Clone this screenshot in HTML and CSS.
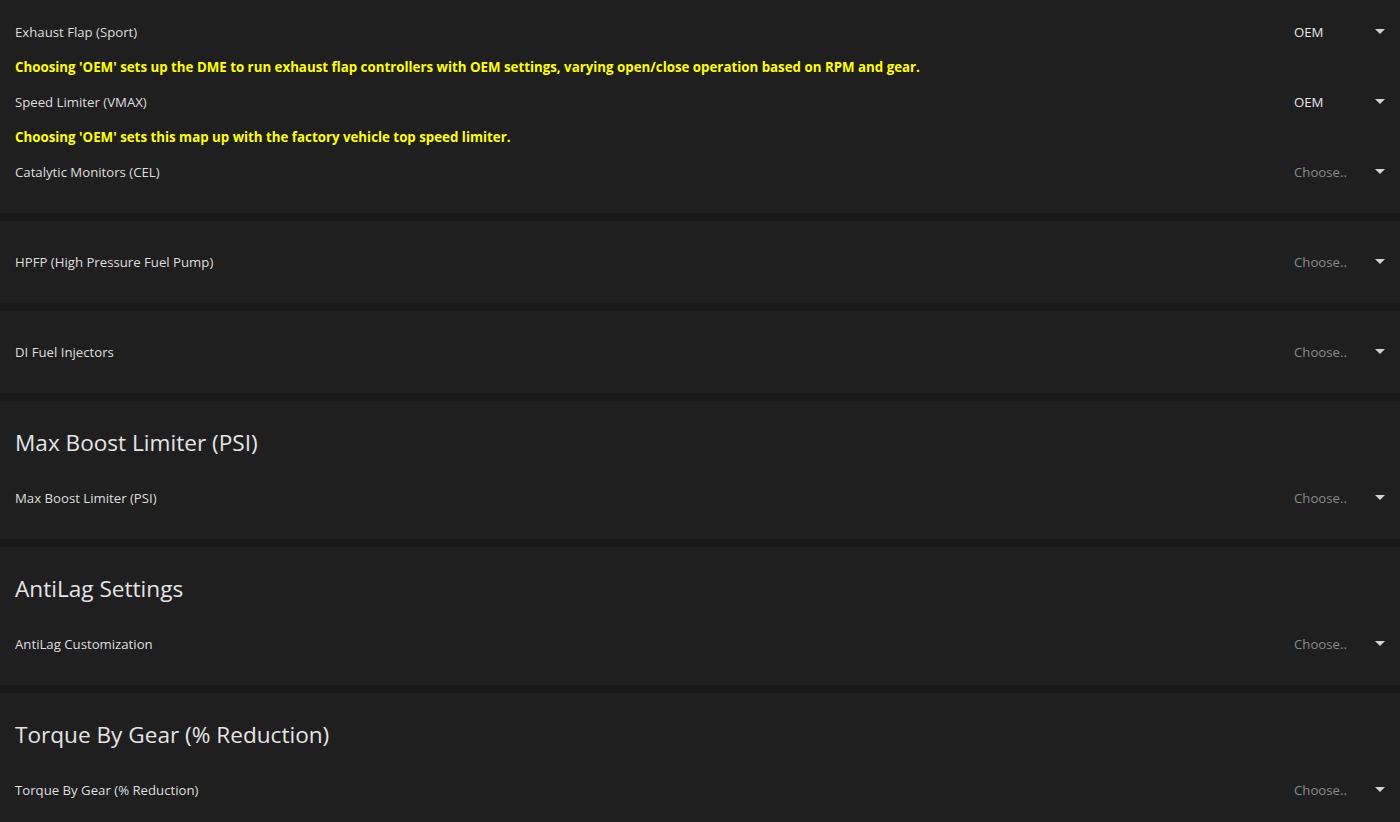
FILE: index.html
```html
<!DOCTYPE html>
<html lang="en">
<head>
    <meta charset="UTF-8">
    <title>Map Options</title>
    <link rel="stylesheet" href="styles.css">
</head>
<body>
    <div class="panel panel-first">
        <div class="option-row">
            <span class="option-label">Exhaust Flap (Sport)</span>
            <div class="picker"><span class="picker-value">OEM</span><span class="caret"></span></div>
        </div>
        <p class="option-note">Choosing 'OEM' sets up the DME to run exhaust flap controllers with OEM settings, varying open/close operation based on RPM and gear.</p>
        <div class="option-row">
            <span class="option-label">Speed Limiter (VMAX)</span>
            <div class="picker"><span class="picker-value">OEM</span><span class="caret"></span></div>
        </div>
        <p class="option-note">Choosing 'OEM' sets this map up with the factory vehicle top speed limiter.</p>
        <div class="option-row">
            <span class="option-label">Catalytic Monitors (CEL)</span>
            <div class="picker"><span class="picker-value empty">Choose..</span><span class="caret"></span></div>
        </div>
    </div>

    <div class="panel">
        <div class="option-row">
            <span class="option-label">HPFP (High Pressure Fuel Pump)</span>
            <div class="picker"><span class="picker-value empty">Choose..</span><span class="caret"></span></div>
        </div>
    </div>

    <div class="panel">
        <div class="option-row">
            <span class="option-label">DI Fuel Injectors</span>
            <div class="picker"><span class="picker-value empty">Choose..</span><span class="caret"></span></div>
        </div>
    </div>

    <div class="panel">
        <h2 class="panel-title">Max Boost Limiter (PSI)</h2>
        <div class="option-row">
            <span class="option-label">Max Boost Limiter (PSI)</span>
            <div class="picker"><span class="picker-value empty">Choose..</span><span class="caret"></span></div>
        </div>
    </div>

    <div class="panel">
        <h2 class="panel-title">AntiLag Settings</h2>
        <div class="option-row">
            <span class="option-label">AntiLag Customization</span>
            <div class="picker"><span class="picker-value empty">Choose..</span><span class="caret"></span></div>
        </div>
    </div>

    <div class="panel">
        <h2 class="panel-title">Torque By Gear (% Reduction)</h2>
        <div class="option-row">
            <span class="option-label">Torque By Gear (% Reduction)</span>
            <div class="picker"><span class="picker-value empty">Choose..</span><span class="caret"></span></div>
        </div>
    </div>
</body>
</html>
```

FILE: styles.css
```css
body {
    font-family: "Open Sans", "Noto Sans", sans-serif;
    margin: 0;
    padding: 0;
    background-color: #191919;
    color: #dedede;
    display: flex;
    flex-direction: column;
    gap: 8px;
}
.panel {
    background-color: #1f1f1f;
    padding: 23px 15px 24px;
}
.panel-first {
    padding-top: 14px;
}
.panel-title {
    margin: 0 0 19px;
    font-size: 22.6px;
    font-weight: 400;
    line-height: 37px;
    color: #e4e4e4;
}
.option-row {
    display: flex;
    align-items: center;
    justify-content: space-between;
    height: 35px;
}
.option-label {
    font-size: 13.2px;
}
.option-note {
    margin: 0;
    height: 35px;
    line-height: 36px;
    font-size: 13.3px;
    font-weight: 700;
    color: #ffff00;
}
.picker {
    display: flex;
    align-items: center;
    justify-content: space-between;
    width: 91px;
    cursor: pointer;
}
.picker-value {
    font-size: 13.2px;
    color: #e6e6e6;
}
.picker-value.empty {
    color: #8a8a8a;
}
.caret {
    width: 0;
    height: 0;
    border-left: 5px solid transparent;
    border-right: 5px solid transparent;
    border-top: 5px solid #d2d2d2;
}
```
